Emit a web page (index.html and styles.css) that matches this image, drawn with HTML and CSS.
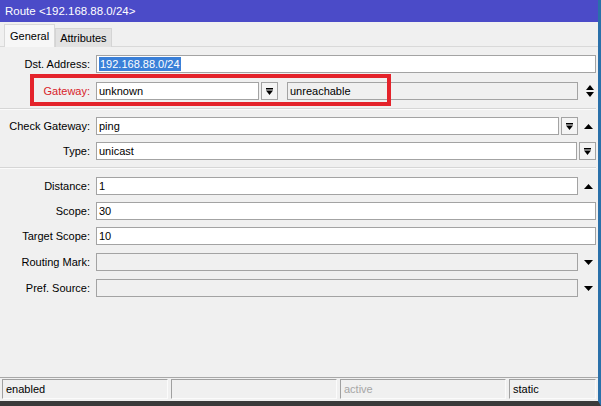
FILE: index.html
```html
<!DOCTYPE html>
<html lang="en">

<head>
    <meta charset="UTF-8">
    <title>Route &lt;192.168.88.0/24&gt;</title>
    <link rel="stylesheet" href="styles.css">
</head>

<body>
    <div class="window">
        <div class="titlebar">Route &lt;192.168.88.0/24&gt;</div>

        <div class="tabs">
            <div class="tab active">General</div>
            <div class="tab">Attributes</div>
        </div>

        <div class="form">
            <div class="row row-dst">
                <label>Dst. Address:</label>
                <div class="field"><span class="selected">192.168.88.0/24</span></div>
                <div class="pad"></div>
            </div>

            <div class="row row-gateway">
                <div class="mark"></div>
                <label class="red">Gateway:</label>
                <div class="field gw-input">unknown</div>
                <div class="dd">
                    <svg width="7" height="7" viewBox="0 0 7 7"><rect x="0" y="0" width="7" height="1.5" fill="#000"/><polygon points="0,2.5 7,2.5 3.5,7" fill="#000"/></svg>
                </div>
                <div class="field readonly gw-state">unreachable</div>
                <div class="side">
                    <svg width="8" height="12" viewBox="0 0 8 12"><polygon points="0,5 8,5 4,0" fill="#000"/><polygon points="0,7 8,7 4,12" fill="#000"/></svg>
                </div>
            </div>

            <div class="sep sep-1"></div>

            <div class="row row-check">
                <label>Check Gateway:</label>
                <div class="field">ping</div>
                <div class="dd">
                    <svg width="7" height="7" viewBox="0 0 7 7"><rect x="0" y="0" width="7" height="1.5" fill="#000"/><polygon points="0,2.5 7,2.5 3.5,7" fill="#000"/></svg>
                </div>
                <div class="side">
                    <svg width="9" height="5" viewBox="0 0 9 5"><polygon points="0,5 9,5 4.5,0" fill="#000"/></svg>
                </div>
            </div>

            <div class="row">
                <label>Type:</label>
                <div class="field">unicast</div>
                <div class="dd">
                    <svg width="7" height="7" viewBox="0 0 7 7"><rect x="0" y="0" width="7" height="1.5" fill="#000"/><polygon points="0,2.5 7,2.5 3.5,7" fill="#000"/></svg>
                </div>
                <div class="pad"></div>
            </div>

            <div class="sep sep-2"></div>

            <div class="row row-distance">
                <label>Distance:</label>
                <div class="field">1</div>
                <div class="side">
                    <svg width="9" height="5" viewBox="0 0 9 5"><polygon points="0,5 9,5 4.5,0" fill="#000"/></svg>
                </div>
            </div>

            <div class="row">
                <label>Scope:</label>
                <div class="field">30</div>
                <div class="pad"></div>
            </div>

            <div class="row">
                <label>Target Scope:</label>
                <div class="field">10</div>
                <div class="pad"></div>
            </div>

            <div class="row row-mark">
                <label>Routing Mark:</label>
                <div class="field readonly"></div>
                <div class="side">
                    <svg width="9" height="5" viewBox="0 0 9 5"><polygon points="0,0 9,0 4.5,5" fill="#000"/></svg>
                </div>
            </div>

            <div class="row row-mark">
                <label>Pref. Source:</label>
                <div class="field readonly"></div>
                <div class="side">
                    <svg width="9" height="5" viewBox="0 0 9 5"><polygon points="0,0 9,0 4.5,5" fill="#000"/></svg>
                </div>
            </div>
        </div>

        <div class="statusbar">
            <div class="cell">enabled</div>
            <div class="cell"></div>
            <div class="cell muted">active</div>
            <div class="cell">static</div>
        </div>
    </div>
</body>

</html>
```

FILE: styles.css
```css
body {
    margin: 0;
    padding: 0;
    font-family: 'Liberation Sans', Arial, sans-serif;
    font-size: 11px;
    color: #000;
    background: #f0f0f0;
}

.window {
    width: 601px;
    height: 406px;
    box-sizing: border-box;
    display: flex;
    flex-direction: column;
    background: #f0f0f0;
    border-right: 3px solid #2a70aa;
    border-bottom: 5px solid #3a3a3a;
    overflow: hidden;
}

.titlebar {
    height: 22px;
    line-height: 22px;
    padding-left: 5px;
    background: #4b4bc8;
    color: #fff;
    font-size: 11.5px;
}

.tabs {
    height: 25px;
    box-sizing: border-box;
    display: flex;
    align-items: flex-end;
    padding-left: 4px;
    border-bottom: 1px solid #d9d9d9;
}

.tab {
    height: 18px;
    line-height: 18px;
    padding: 0 4px;
    background: #e2e2e2;
    border: 1px solid #d4d4d4;
    border-bottom: none;
    margin-bottom: -1px;
}

.tab.active {
    height: 22px;
    line-height: 22px;
    padding: 0 5px;
    background: #f7f7f7;
    border-color: #d9d9d9;
    position: relative;
    z-index: 1;
}

.form {
    flex: 1;
    padding-top: 8px;
}

.row {
    display: flex;
    align-items: center;
    height: 18px;
    margin-bottom: 7px;
    padding-right: 2px;
}

.row label {
    width: 90px;
    margin-right: 6px;
    text-align: right;
    flex-shrink: 0;
}

.row label.red {
    color: #d8232a;
}

.field {
    flex: 1;
    height: 18px;
    line-height: 16px;
    box-sizing: border-box;
    padding-left: 2px;
    background: #fff;
    border: 1px solid #a3a3a3;
    white-space: nowrap;
    overflow: hidden;
}

.field.readonly {
    background: #f0f0f0;
}

.selected {
    display: inline-block;
    line-height: 14px;
    padding: 0 1px;
    background: #3a80d8;
    color: #fff;
}

.dd {
    width: 17px;
    height: 18px;
    box-sizing: border-box;
    margin-left: 2px;
    border: 1px solid #a3a3a3;
    background: #f4f4f4;
    display: flex;
    align-items: center;
    justify-content: center;
}

.side {
    width: 20px;
    height: 18px;
    box-sizing: border-box;
    margin-right: -2px;
    display: flex;
    align-items: center;
    justify-content: center;
    flex-shrink: 0;
}

.pad {
    width: 0;
}

.row-dst {
    margin-bottom: 9px;
}

.row-gateway {
    position: relative;
    margin-bottom: 8px;
}

.gw-input {
    flex: none;
    width: 163px;
}

.gw-state {
    margin-left: 9px;
}

.row-gateway .side {
    padding-left: 4px;
}

/* red box drawn over the gateway row */
.mark {
    position: absolute;
    left: 30px;
    top: -8px;
    width: 361px;
    height: 32px;
    box-sizing: border-box;
    border: 4px solid #e4232b;
    pointer-events: none;
}

.sep {
    height: 0;
    border-top: 1px solid #d6d6d6;
    border-bottom: 1px solid #fbfbfb;
    margin: 0 2px 7px 0;
}

.sep-2 {
    margin-top: 1px;
    margin-bottom: 8px;
}

.row-mark {
    margin-top: 8px;
    margin-bottom: 0;
}

.statusbar {
    display: flex;
    gap: 3px;
    padding: 1px 2px 2px 2px;
    border-top: 1px solid #a8a8a8;
}

.cell {
    width: 166px;
    height: 20px;
    line-height: 19px;
    box-sizing: border-box;
    padding-left: 3px;
    border-top: 1px solid #a0a0a0;
    border-left: 1px solid #a0a0a0;
    border-right: 1px solid #fbfbfb;
    border-bottom: 1px solid #fbfbfb;
}

.cell:last-child {
    flex: 1;
}

.cell.muted {
    color: #a6a6a6;
}
```
